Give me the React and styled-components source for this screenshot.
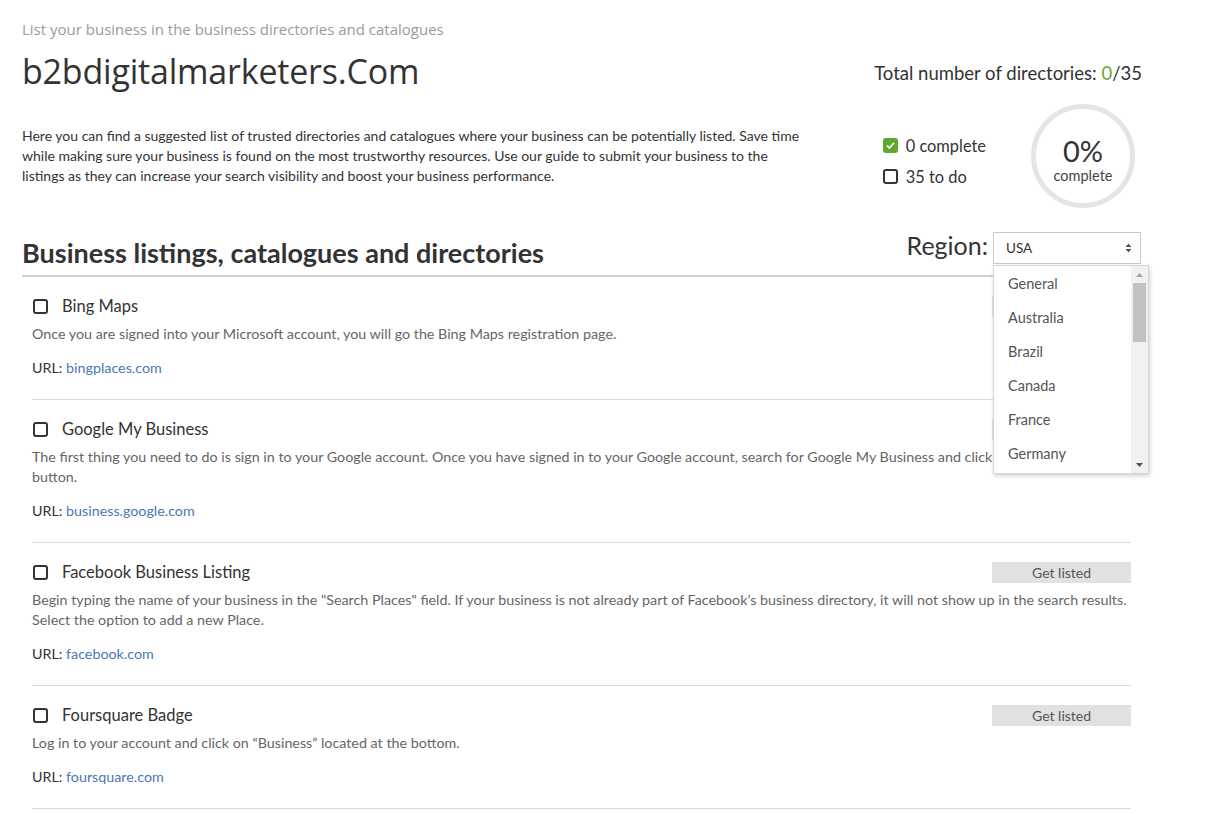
import React from 'react'
import styled, { createGlobalStyle } from 'styled-components'

const Global = createGlobalStyle`
    html, body { margin: 0; padding: 0; background: #fff; }
    body { font-family: Lato, "Open Sans", sans-serif; color: #333; }
    * { box-sizing: border-box; }
`

const listings = [
    {
        title: 'Bing Maps',
        text: 'Once you are signed into your Microsoft account, you will go the Bing Maps registration page.',
        url: 'bingplaces.com',
    },
    {
        title: 'Google My Business',
        text: 'The first thing you need to do is sign in to your Google account. Once you have signed in to your Google account, search for Google My Business and click on the "Get Started" button.',
        url: 'business.google.com',
    },
    {
        title: 'Facebook Business Listing',
        text: 'Begin typing the name of your business in the "Search Places" field. If your business is not already part of Facebook\u2019s business directory, it will not show up in the search results. Select the option to add a new Place.',
        url: 'facebook.com',
    },
    {
        title: 'Foursquare Badge',
        text: 'Log in to your account and click on \u201cBusiness\u201d located at the bottom.',
        url: 'foursquare.com',
    },
]

const regions = ['General', 'Australia', 'Brazil', 'Canada', 'France', 'Germany', 'India', 'Italy']

export default function App() {
    return (
        <>
            <Global />
            <Page>
                <TopRow>
                    <div>
                        <Kicker>List your business in the business directories and catalogues</Kicker>
                        <SiteName>b2bdigitalmarketers.Com</SiteName>
                    </div>
                    <Total>Total number of directories: <Green>0</Green>/35</Total>
                </TopRow>
                <IntroRow>
                    <Intro>
                        Here you can find a suggested list of trusted directories and catalogues where your business can be potentially listed. Save time while making sure your business is found on the most trustworthy resources. Use our guide to submit your business to the listings as they can increase your search visibility and boost your business performance.
                    </Intro>
                    <Stats>
                        <Legend>
                            <LegendRow><Box checked /> 0 complete</LegendRow>
                            <LegendRow><Box /> 35 to do</LegendRow>
                        </Legend>
                        <Ring>
                            <Percent>0%</Percent>
                            <RingLabel>complete</RingLabel>
                        </Ring>
                    </Stats>
                </IntroRow>
                <SectionHead>
                    <Heading>Business listings, catalogues and directories</Heading>
                    <RegionWrap>
                        <RegionLabel>Region:</RegionLabel>
                        <SelectHolder>
                            <Select>
                                USA
                                <Arrows>
                                    <svg width="7" height="10" viewBox="0 0 7 10"><path d="M3.5 0.5 L6.5 4 H0.5 Z M3.5 9.5 L6.5 6 H0.5 Z" fill="#555" /></svg>
                                </Arrows>
                            </Select>
                            <Dropdown>
                                <Options>
                                    {regions.map((r) => <Option key={r}>{r}</Option>)}
                                </Options>
                                <Scrollbar>
                                    <ScrollArrow>
                                        <svg width="7" height="4" viewBox="0 0 7 4"><path d="M3.5 0 L7 4 H0 Z" fill="#a3a3a3" /></svg>
                                    </ScrollArrow>
                                    <Thumb />
                                    <Track />
                                    <ScrollArrow>
                                        <svg width="7" height="4" viewBox="0 0 7 4"><path d="M0 0 H7 L3.5 4 Z" fill="#505050" /></svg>
                                    </ScrollArrow>
                                </Scrollbar>
                            </Dropdown>
                        </SelectHolder>
                    </RegionWrap>
                </SectionHead>
                <List>
                    {listings.map((l) => (
                        <Item key={l.title}>
                            <ItemHead>
                                <ItemTitle><Box /> <span>{l.title}</span></ItemTitle>
                                <GetListed>Get listed</GetListed>
                            </ItemHead>
                            <ItemText>{l.text}</ItemText>
                            <Url>URL: <UrlLink href="#">{l.url}</UrlLink></Url>
                        </Item>
                    ))}
                </List>
            </Page>
        </>
    )
}

function Box({ checked }) {
    return (
        <Check checked={checked}>
            {checked && (
                <svg width="9" height="7" viewBox="0 0 9 7"><path d="M1 3.6 L3.4 6 L8 1" stroke="#fff" strokeWidth="1.8" fill="none" /></svg>
            )}
        </Check>
    )
}

const Page = styled.div`
    width: 1141px;
    padding: 19px 0 0 22px;
`
const TopRow = styled.div`
    display: flex;
    justify-content: space-between;
    align-items: flex-start;
`
const Kicker = styled.div`
    font-family: "Open Sans", sans-serif;
    font-size: 15px;
    color: #9a9a9a;
    line-height: 20px;
`
const SiteName = styled.h1`
    margin: 9px 0 0;
    font-family: "Open Sans", sans-serif;
    font-weight: 400;
    font-size: 34px;
    line-height: 46px;
    color: #333;
    letter-spacing: -0.2px;
`
const Total = styled.div`
    margin-top: 43px;
    font-size: 18.5px;
    line-height: 22px;
    color: #333;
    margin-right: -1px;
`
const Green = styled.span`
    color: #6aa63b;
`
const IntroRow = styled.div`
    display: flex;
    justify-content: space-between;
    align-items: center;
    margin-top: 10px;
`
const Intro = styled.p`
    margin: 0;
    width: 785px;
    font-size: 14px;
    line-height: 20px;
    color: #333;
`
const Stats = styled.div`
    display: flex;
    align-items: center;
    margin-right: 6px;
`
const Legend = styled.div`
    display: flex;
    flex-direction: column;
    gap: 11px;
    margin: 10px 45px 0 0;
`
const LegendRow = styled.div`
    display: flex;
    align-items: center;
    gap: 8px;
    font-size: 16.4px;
    line-height: 20px;
    color: #333;
`
const Check = styled.span`
    display: inline-flex;
    align-items: center;
    justify-content: center;
    flex-shrink: 0;
    width: 15px;
    height: 15px;
    border-radius: 3px;
    border: ${(p) => (p.checked ? 'none' : '2px solid #333')};
    background: ${(p) => (p.checked ? '#5fa82e' : '#fff')};
`
const Ring = styled.div`
    width: 104px;
    height: 104px;
    border-radius: 50%;
    border: 5px solid #e5e5e5;
    display: flex;
    flex-direction: column;
    align-items: center;
    justify-content: center;
    padding-top: 7px;
`
const Percent = styled.div`
    font-size: 29px;
    line-height: 32px;
    color: #333;
`
const RingLabel = styled.div`
    font-size: 14.5px;
    line-height: 18px;
    color: #444;
`
const SectionHead = styled.div`
    display: flex;
    justify-content: space-between;
    align-items: flex-end;
    margin-top: 29px;
    padding-bottom: 6px;
    border-bottom: 2px solid #cfcfcf;
`
const Heading = styled.h2`
    margin: 0;
    font-size: 27px;
    font-weight: 700;
    line-height: 32px;
    color: #333;
`
const RegionWrap = styled.div`
    display: flex;
    align-items: center;
    gap: 5px;
    align-self: flex-start;
    margin-top: -5px;
`
const RegionLabel = styled.span`
    font-size: 25px;
    color: #333;
    line-height: 28px;
    margin-top: -6px;
`
const SelectHolder = styled.div`
    position: relative;
`
const Select = styled.div`
    width: 148px;
    height: 32px;
    border: 1px solid #c9c9c9;
    display: flex;
    align-items: center;
    justify-content: space-between;
    padding: 0 8px 0 12px;
    font-size: 13.5px;
    color: #333;
    background: #fff;
`
const Arrows = styled.span`
    display: flex;
`
const Dropdown = styled.div`
    position: absolute;
    top: 33px;
    left: 0;
    width: 156px;
    height: 209px;
    background: #fff;
    border: 1px solid #d6d6d6;
    box-shadow: 1px 2px 4px rgba(0, 0, 0, 0.18);
    display: flex;
    z-index: 5;
`
const Options = styled.div`
    flex: 1;
    overflow: hidden;
    padding-top: 7px;
`
const Option = styled.div`
    height: 34px;
    line-height: 22px;
    padding: 0 14px;
    font-size: 14.5px;
    color: #555;
`
const Scrollbar = styled.div`
    width: 17px;
    background: #f1f1f1;
    display: flex;
    flex-direction: column;
`
const ScrollArrow = styled.div`
    height: 17px;
    display: flex;
    align-items: center;
    justify-content: center;
`
const Thumb = styled.div`
    height: 59px;
    margin: 0 2px;
    background: #c1c1c1;
`
const Track = styled.div`
    flex: 1;
`
const List = styled.div`
    padding: 0 10px;
`
const Item = styled.div`
    padding: 18px 0 21px;
    border-bottom: 1px solid #d9d9d9;
`
const ItemHead = styled.div`
    display: flex;
    justify-content: space-between;
    align-items: center;
    height: 22px;
`
const ItemTitle = styled.div`
    display: flex;
    align-items: center;
    gap: 14px;
    font-size: 16.5px;
    color: #333;
    padding-left: 1px;
`
const GetListed = styled.button`
    width: 139px;
    height: 21px;
    border: none;
    background: #e1e1e1;
    color: #555;
    font-family: Lato, sans-serif;
    font-size: 14px;
    padding: 0;
`
const ItemText = styled.p`
    margin: 7px 0 0;
    font-size: 14.3px;
    line-height: 20px;
    color: #666;
`
const Url = styled.div`
    margin-top: 14px;
    font-size: 14.3px;
    line-height: 20px;
    color: #333;
`
const UrlLink = styled.a`
    color: #4a78b5;
    text-decoration: none;
`
